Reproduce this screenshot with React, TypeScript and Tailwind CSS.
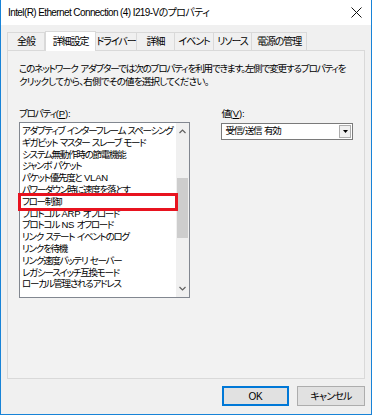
import type { ReactNode } from "react";

const items = [
  "アダプティブ インターフレーム スペーシング",
  "ギガビット マスター スレーブ モード",
  "システム無動作時の節電機能",
  "ジャンボ パケット",
  "パケット優先度と VLAN",
  "パワーダウン時に速度を落とす",
  "フロー制御",
  "プロトコル ARP オフロード",
  "プロトコル NS オフロード",
  "リンク ステート イベントのログ",
  "リンクを待機",
  "リンク速度バッテリ セーバー",
  "レガシースイッチ互換モード",
  "ローカル管理されるアドレス",
];

const tabs = [
  { label: "全般", w: "w-[38px]" },
  { label: "詳細設定", w: "w-[51px]", active: true },
  { label: "ドライバー", w: "w-[41px]" },
  { label: "詳細", w: "w-[38px]" },
  { label: "イベント", w: "w-[39px]" },
  { label: "リソース", w: "w-[38px]" },
  { label: "電源の管理", w: "w-[55px]" },
];

// ascii runs (spaces, latin, slash) keep normal spacing, kana get squeezed
function jp(s: string): ReactNode[] {
  return s.split(/([\x20-\x7e]+)/).map((part, i) =>
    /[\x20-\x7e]/.test(part) ? (
      <span key={i} className="tracking-[-0.2px]">
        {part}
      </span>
    ) : (
      part
    )
  );
}

function Chevron({ down }: { down?: boolean }) {
  return (
    <svg width="7" height="5" viewBox="0 0 7 5" className={down ? "rotate-180" : ""}>
      <path d="M0.5 4 L3.5 1 L6.5 4" fill="none" stroke="#606060" strokeWidth="1.2" />
    </svg>
  );
}

export default function App() {
  return (
    <div className="w-[372px] h-[415px] flex flex-col bg-[#f0f0f0] border-x border-b border-[#1883d7] text-black text-[9.5px] tracking-[-1.1px] whitespace-nowrap [font-family:'Liberation_Sans','Noto_Sans_CJK_JP',sans-serif] [font-feature-settings:'palt']">
      {/* title bar */}
      <div className="h-[25px] bg-white flex items-center justify-between pl-[7px] pr-[9px] shrink-0">
        <span className="text-[10px] tracking-[-0.6px]">Intel(R) Ethernet Connection (4) I219-Vのプロパティ</span>
        <svg width="11" height="11" viewBox="0 0 11 11">
          <path d="M0.5 0.5 L10.5 10.5 M10.5 0.5 L0.5 10.5" stroke="#111" strokeWidth="1" />
        </svg>
      </div>

      <div className="flex-1 flex flex-col px-[6px]">
        {/* tabs */}
        <div className="flex items-end h-[25px] pt-[5px]">
          {tabs.map((t) =>
            t.active ? (
              <div
                key={t.label}
                className={`${t.w} h-[20px] -mb-px relative z-10 bg-white border-x border-t border-[#d9d9d9] flex items-center justify-center pb-[1px] text-[10px]`}
              >
                {t.label}
              </div>
            ) : (
              <div
                key={t.label}
                className={`${t.w} h-[18px] bg-[#f0f0f0] border-t border-r first:border-l border-[#d9d9d9] flex items-center justify-center text-[10px]`}
              >
                {t.label}
              </div>
            )
          )}
        </div>

        {/* tab page */}
        <div className="h-[329px] border border-[#d9d9d9] bg-[#f2f2f2] px-[11px] pt-[11px]">
          <p className="leading-[13px]">
            {jp("このネットワーク アダプターでは次のプロパティを利用できます。左側で変更するプロパティを")}
            <br />
            <span className="tracking-[-0.75px]">クリックしてから、右側でその値を選択してください。</span>
          </p>

          <div className="flex gap-[31px] mt-[19px]">
            <div className="w-[172px]">
              <div className="leading-[13px]">
                プロパティ<span className="tracking-[-0.2px]">(<span className="underline">P</span>):</span>
              </div>
              <div className="relative mt-[2px] h-[176px] border border-[#828790] bg-white flex">
                <ul className="flex-1 pl-[2px] pt-[2px] leading-[11.8px] tracking-[-1.25px] overflow-hidden">
                  {items.map((it) => (
                    <li key={it}>{jp(it)}</li>
                  ))}
                </ul>
                <div className="w-[13px] bg-[#f0f0f0] flex flex-col items-center justify-between py-[6px]">
                  <Chevron />
                  <div className="flex-1 w-full flex flex-col pt-[44px] pb-[40px]">
                    <div className="h-[60px] mx-[1px] bg-[#cdcdcd]" />
                  </div>
                  <Chevron down />
                </div>
                <div className="absolute left-[-2px] top-[70px] w-[160px] h-[18px] border-[3px] border-[#e8131f]" />
              </div>
            </div>

            <div className="w-[132px]">
              <div className="leading-[13px]">
                値<span className="tracking-[-0.2px]">(<span className="underline">V</span>):</span>
              </div>
              <div className="mt-[3px] h-[17px] border border-[#7a7a7a] bg-white flex items-center">
                <span className="flex-1 pl-[3px]">{jp("受信/送信 有効")}</span>
                <div className="w-[12px] h-[13px] mr-[1px] border border-[#adadad] bg-[#f0f0f0] flex items-center justify-center">
                  <svg width="5" height="3" viewBox="0 0 5 3">
                    <path d="M0 0 H5 L2.5 3 Z" fill="#000" />
                  </svg>
                </div>
              </div>
            </div>
          </div>
        </div>

        {/* buttons */}
        <div className="flex justify-end gap-[8px] mt-[7px]">
          <button className="w-[67px] h-[20px] border border-[#0078d7] bg-[#e1e1e1] shadow-[inset_0_0_0_1px_#0078d7] text-[10px] tracking-[-0.3px]">OK</button>
          <button className="w-[68px] h-[20px] border border-[#adadad] bg-[#e1e1e1] text-[10px] tracking-[-0.8px]">キャンセル</button>
        </div>
      </div>
    </div>
  );
}
